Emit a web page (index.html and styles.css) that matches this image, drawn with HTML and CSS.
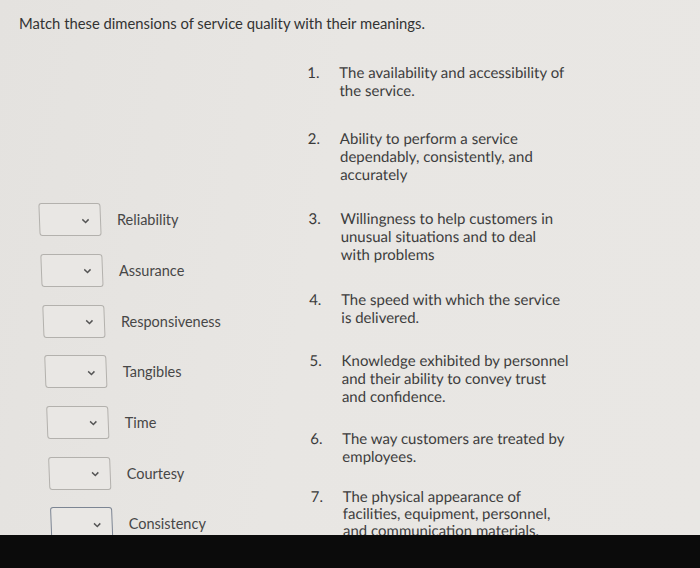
FILE: index.html
```html
<!DOCTYPE html>
<html lang="en">
<head>
<meta charset="utf-8">
<title>Match service quality</title>
<link rel="stylesheet" href="styles.css">
</head>
<body>
<div class="screen">
  <p class="title">Match these dimensions of service quality with their meanings.</p>
  <div class="match">
    <div class="terms">
      <div class="term"><span class="select"><svg class="chev" viewBox="0 0 10 6"><path d="M1.5 1.2 L5 4.6 L8.5 1.2"/></svg></span><span class="label">Reliability</span></div>
      <div class="term"><span class="select"><svg class="chev" viewBox="0 0 10 6"><path d="M1.5 1.2 L5 4.6 L8.5 1.2"/></svg></span><span class="label">Assurance</span></div>
      <div class="term"><span class="select"><svg class="chev" viewBox="0 0 10 6"><path d="M1.5 1.2 L5 4.6 L8.5 1.2"/></svg></span><span class="label">Responsiveness</span></div>
      <div class="term"><span class="select"><svg class="chev" viewBox="0 0 10 6"><path d="M1.5 1.2 L5 4.6 L8.5 1.2"/></svg></span><span class="label">Tangibles</span></div>
      <div class="term"><span class="select"><svg class="chev" viewBox="0 0 10 6"><path d="M1.5 1.2 L5 4.6 L8.5 1.2"/></svg></span><span class="label">Time</span></div>
      <div class="term"><span class="select"><svg class="chev" viewBox="0 0 10 6"><path d="M1.5 1.2 L5 4.6 L8.5 1.2"/></svg></span><span class="label">Courtesy</span></div>
      <div class="term"><span class="select focus"><svg class="chev" viewBox="0 0 10 6"><path d="M1.5 1.2 L5 4.6 L8.5 1.2"/></svg></span><span class="label">Consistency</span></div>
    </div>
    <ol class="meanings">
      <li class="m m1"><span class="num">1.</span><span class="txt">The availability and accessibility of the service.</span></li>
      <li class="m m2"><span class="num">2.</span><span class="txt">Ability to perform a service dependably, consistently, and accurately</span></li>
      <li class="m m3"><span class="num">3.</span><span class="txt">Willingness to help customers in unusual situations and to deal with problems</span></li>
      <li class="m m4"><span class="num">4.</span><span class="txt">The speed with which the service is delivered.</span></li>
      <li class="m m5"><span class="num">5.</span><span class="txt">Knowledge exhibited by personnel and their ability to convey trust and confidence.</span></li>
      <li class="m m6"><span class="num">6.</span><span class="txt">The way customers are treated by employees.</span></li>
      <li class="m m7"><span class="num">7.</span><span class="txt">The physical appearance of facilities, equipment, personnel, and communication materials.</span></li>
    </ol>
  </div>
</div>
<div class="bezel"></div>
</body>
</html>
```
FILE: styles.css
```css
html, body {
  margin: 0;
  padding: 0;
}
body {
  width: 700px;
  height: 568px;
  overflow: hidden;
  background: #0b0b0b;
  font-family: Lato, "Open Sans", sans-serif;
  color: #3b3b3b;
}
.screen {
  height: 535px;
  overflow: hidden;
  background: linear-gradient(100deg, #e4e2df 0%, #e8e6e3 45%, #e9e7e4 100%);
}
.title {
  margin: 0;
  padding: 14px 0 0 19px;
  font-size: 14.8px;
  line-height: 19px;
  color: #333;
}
.match {
  display: flex;
  align-items: flex-start;
}
.terms {
  width: 267px;
  flex: none;
  padding: 170px 0 0 39px;
  display: flex;
  flex-direction: column;
  gap: 17.3px;
  transform: skewX(2.2deg);
  transform-origin: 0 187px;
  box-sizing: content-box;
}
.term {
  display: flex;
  align-items: center;
  gap: 16px;
  height: 33.4px;
}
.select {
  height: 31px;
  width: 50px;
  border: 1px solid #b3b1ad;
  border-radius: 3px;
  background: #e9e7e4;
  display: flex;
  align-items: center;
  justify-content: flex-end;
  padding-right: 10px;
  box-sizing: content-box;
  flex: none;
}
.select.focus {
  border-color: #7c8593;
}
.chev {
  width: 9px;
  height: 6px;
  fill: none;
  stroke: #555;
  stroke-width: 1.6;
  margin-top: 2px;
}
.label {
  font-size: 14.5px;
  color: #474747;
  transform: skewX(-2.2deg);
}
.meanings {
  list-style: none;
  margin: 0;
  padding: 30px 0 0 0;
  width: 262px;
  display: flex;
  flex-direction: column;
  transform: skewX(0.45deg);
  transform-origin: 0 0;
}
.m {
  display: flex;
  font-size: 15px;
  line-height: 18px;
  color: #3d3d3d;
}
.m1 { margin-bottom: 30px; }
.m2 { margin-bottom: 26px; }
.m3 { margin-bottom: 27px; }
.m4 { margin-bottom: 25px; }
.m5 { margin-bottom: 24px; }
.m6 { margin-bottom: 23px; }
.m7 { line-height: 17px; }
.num {
  width: 33px;
  flex: none;
  padding-left: 1px;
  box-sizing: border-box;
  color: #3a3a3a;
}
.txt {
  width: 227px;
}
.bezel {
  height: 33px;
  background: #0b0b0b;
}
```
